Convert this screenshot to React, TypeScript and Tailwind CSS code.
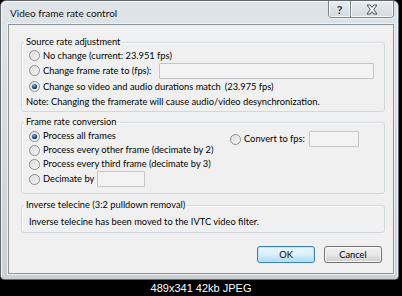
import React, { useId } from "react";

function Radio({ checked }: { checked?: boolean }) {
  const id = useId().replace(/:/g, "");
  return (
    <svg width="11" height="11" viewBox="0 0 11 11" className="shrink-0 block">
      <defs>
        <linearGradient id={`g${id}`} x1="0" y1="0" x2="1" y2="1">
          <stop offset="0" stopColor="#d4d4d4" />
          <stop offset="1" stopColor="#fbfbfb" />
        </linearGradient>
        <radialGradient id={`d${id}`} cx="0.4" cy="0.35" r="0.75">
          <stop offset="0" stopColor="#7db3e0" />
          <stop offset="0.6" stopColor="#1f4f86" />
          <stop offset="1" stopColor="#0c2a4e" />
        </radialGradient>
      </defs>
      <circle cx="5.5" cy="5.5" r="5" fill={`url(#g${id})`} stroke="#8c8c8c" strokeWidth="1" />
      <circle cx="5.5" cy="5.5" r="3.6" fill="none" stroke="#ececec" strokeWidth="0.8" />
      {checked && <circle cx="5.5" cy="5.5" r="2.6" fill={`url(#d${id})`} />}
    </svg>
  );
}

function RadioLabel({ checked, children }: { checked?: boolean; children: React.ReactNode }) {
  return (
    <div className="flex items-center gap-[3px] whitespace-nowrap">
      <Radio checked={checked} />
      <span>{children}</span>
    </div>
  );
}

function TextBox({ className }: { className: string }) {
  return <div className={`border border-[#c2c5c9] bg-[#f3f3f3] rounded-[1px] ${className}`} />;
}

export default function App() {
  return (
    <div className="w-[402px] h-[296px] bg-black flex flex-col overflow-hidden">
      <div className="w-[399px] h-[280px] shrink-0 rounded-t-[6px] rounded-b-[4px] border border-[#62686e] bg-gradient-to-b from-[#dfe4e9] to-[#cbd0d5] shadow-[inset_1px_1px_0_#f4f6f8,inset_-1px_0_0_#f4f6f8] flex flex-col pl-[7px] pr-[4px] pb-[5px] font-['Lato',sans-serif] text-black">
        {/* Title bar */}
        <div className="h-[23px] shrink-0 flex items-start justify-between">
          <div className="pt-[4px] pl-[2px] text-[10px] leading-[16px] text-[#111]">Video frame rate control</div>
          <div className="flex h-[17px] border border-t-0 border-[#7c8389] rounded-b-[4px] overflow-hidden shadow-[0_1px_0_#eef1f4]">
            <div className="w-[21px] h-full flex items-center justify-center bg-gradient-to-b from-[#e9edf1] to-[#d3d9df] shadow-[inset_0_0_0_1px_#f5f7f9]">
              <span className="font-['Noto_Sans',sans-serif] text-[11px] font-bold leading-none text-[#3d4248] [text-shadow:0_0_1px_#fff]">?</span>
            </div>
            <div className="w-[43px] h-full flex items-center justify-center border-l border-[#7c8389] bg-gradient-to-b from-[#e9edf1] to-[#d3d9df] shadow-[inset_0_0_0_1px_#f5f7f9]">
              <svg width="12" height="11" viewBox="0 0 12 11">
                <path d="M1 1h3.2l1.8 2.4 1.8-2.4H11L7.8 5.5 11 10H7.8L6 7.6 4.2 10H1l3.2-4.5z" fill="#f4f6f8" stroke="#4a5058" strokeWidth="1" strokeLinejoin="round" />
              </svg>
            </div>
          </div>
        </div>

        {/* Client area */}
        <div className="flex-1 border border-[#8d949a] bg-[#f0f0f0] shadow-[0_0_0_1px_#eef1f4] pl-[12px] pr-[8px] pt-[10px] pb-[8px] flex flex-col text-[9.3px]">
          {/* Source rate adjustment */}
          <fieldset className="border border-[#d0d8de] rounded-[3px] px-[7px] pb-[2px] shadow-[inset_1px_1px_0_#fff]">
            <legend className="ml-[-5px] px-[2px] leading-[14px]">Source rate adjustment</legend>
            <div className="flex flex-col">
              <div className="h-[13px] flex items-center">
                <RadioLabel>No change (current: 23.951 fps)</RadioLabel>
              </div>
              <div className="h-[17px] flex items-center">
                <RadioLabel>Change frame rate to (fps):</RadioLabel>
                <div className="flex-1" />
                <TextBox className="w-[215px] h-[16px] mr-[3px]" />
              </div>
              <div className="h-[15px] flex items-center">
                <RadioLabel checked>
                  Change so video and audio durations match<span className="ml-[4px]">(23.975 fps)</span>
                </RadioLabel>
              </div>
              <div className="h-[15px] flex items-center ml-[-3px] whitespace-nowrap">
                Note: Changing the framerate will cause audio/video desynchronization.
              </div>
            </div>
          </fieldset>

          {/* Frame rate conversion */}
          <fieldset className="mt-[3px] border border-[#d0d8de] rounded-[3px] px-[7px] pb-[6px] shadow-[inset_1px_1px_0_#fff]">
            <legend className="ml-[-5px] px-[2px] leading-[14px]">Frame rate conversion</legend>
            <div className="flex">
              <div className="w-[201px] flex flex-col">
                <div className="h-[14px] flex items-center">
                  <RadioLabel checked>Process all frames</RadioLabel>
                </div>
                <div className="h-[14px] flex items-center">
                  <RadioLabel>Process every other frame (decimate by 2)</RadioLabel>
                </div>
                <div className="h-[14px] flex items-center">
                  <RadioLabel>Process every third frame (decimate by 3)</RadioLabel>
                </div>
                <div className="h-[16px] flex items-center">
                  <RadioLabel>Decimate by</RadioLabel>
                  <TextBox className="ml-[3px] w-[48px] h-[16px]" />
                </div>
              </div>
              <div className="mt-[2px] h-[16px] flex items-center">
                <RadioLabel>Convert to fps:</RadioLabel>
                <TextBox className="ml-[4px] w-[50px] h-[16px]" />
              </div>
            </div>
          </fieldset>

          {/* Inverse telecine */}
          <fieldset className="mt-[4px] border border-[#d0d8de] rounded-[3px] px-[7px] pt-[3px] pb-[3px] shadow-[inset_1px_1px_0_#fff]">
            <legend className="ml-[-5px] px-[2px] leading-[14px]">Inverse telecine (3:2 pulldown removal)</legend>
            <div className="h-[14px] flex items-center whitespace-nowrap">
              Inverse telecine has been moved to the IVTC video filter.
            </div>
          </fieldset>

          {/* Buttons */}
          <div className="mt-[13px] flex justify-end gap-[9px] mr-[3px]">
            <button className="w-[58px] h-[17px] rounded-[3px] border border-[#3c7fb1] bg-gradient-to-b from-[#eaf6fd] via-[#d9f0fc] to-[#a7d9f5] shadow-[inset_0_0_0_1px_#bfe6fb] flex items-center justify-center leading-none text-[9.3px]">
              OK
            </button>
            <button className="w-[58px] h-[17px] rounded-[3px] border border-[#707070] bg-gradient-to-b from-[#f2f2f2] via-[#e6e6e6] to-[#cfcfcf] shadow-[inset_0_0_0_1px_#fbfbfb] flex items-center justify-center leading-none text-[9.3px]">
              Cancel
            </button>
          </div>
        </div>
      </div>
      <div className="flex-1 flex items-center justify-center font-['Liberation_Sans',Arial,sans-serif] text-[11px] text-white leading-none">
        489x341 42kb JPEG
      </div>
    </div>
  );
}
